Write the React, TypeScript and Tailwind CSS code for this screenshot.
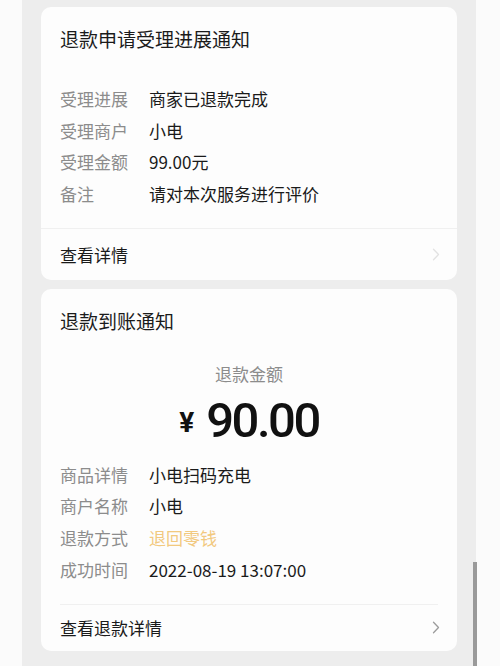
const font = "font-['PingFang_SC','Noto_Sans_CJK_SC',sans-serif]"

interface Row {
  label: string
  value: string
  accent?: boolean
}

const progressRows: Row[] = [
  { label: '受理进展', value: '商家已退款完成' },
  { label: '受理商户', value: '小电' },
  { label: '受理金额', value: '99.00元' },
  { label: '备注', value: '请对本次服务进行评价' },
]

const refundRows: Row[] = [
  { label: '商品详情', value: '小电扫码充电' },
  { label: '商户名称', value: '小电' },
  { label: '退款方式', value: '退回零钱', accent: true },
  { label: '成功时间', value: '2022-08-19 13:07:00' },
]

function Chevron({ color }: { color: string }) {
  return (
    <svg width="8" height="13" viewBox="0 0 8 13" fill="none" className={color}>
      <path d="M1.5 1.2 L6.5 6.5 L1.5 11.8" stroke="currentColor" strokeWidth="1.3" strokeLinecap="round" strokeLinejoin="round" />
    </svg>
  )
}

function InfoRows({ rows }: { rows: Row[] }) {
  return (
    <div className="flex flex-col">
      {rows.map((r) => (
        <div key={r.label} className="flex h-[31.7px] items-center text-[17px] leading-[31.7px]">
          <span className="w-[89px] shrink-0 text-[#8c8c8c]">{r.label}</span>
          <span className={r.accent ? 'text-[#f2c97f]' : 'text-[#1a1a1a]'}>{r.value}</span>
        </div>
      ))}
    </div>
  )
}

export default function App() {
  return (
    <div className={`relative h-[666px] w-[500px] overflow-hidden bg-[#fbfbfb] ${font}`}>
      <div className="ml-[22px] flex h-full w-[454px] flex-col gap-[9px] bg-[#ededed] px-[19px] pt-[7px]">
        {/* 受理进展 */}
        <div className="rounded-[10px] bg-[#fdfdfd]">
          <div className="px-[19px] pb-[18px] pt-[18px]">
            <div className="text-[19px] leading-[28px] text-[#1b1b1b]">退款申请受理进展通知</div>
            <div className="mt-[30px]">
              <InfoRows rows={progressRows} />
            </div>
          </div>
          <div className="h-px bg-[#f0f0f0]" />
          <div className="flex h-[51px] items-center justify-between pl-[19px] pr-[17px]">
            <span className="text-[17px] text-[#1a1a1a]">查看详情</span>
            <Chevron color="text-[#e2e2e2]" />
          </div>
        </div>

        {/* 退款到账 */}
        <div className="rounded-[10px] bg-[#fdfdfd]">
          <div className="px-[19px] pb-[18px] pt-[18px]">
            <div className="text-[19px] leading-[28px] text-[#1b1b1b]">退款到账通知</div>
            <div className="mt-[25px] text-center text-[17px] leading-[28px] text-[#8c8c8c]">退款金额</div>
            <div className="mt-[5px] flex h-[56px] items-center justify-center">
              <span className="mr-[12px] mt-[4px] font-['Roboto',sans-serif] text-[28px] font-bold text-[#111]">¥</span>
              <span className="font-['Roboto',sans-serif] text-[49px] font-medium leading-none tracking-[-2.5px] text-[#111]">
                90.00
              </span>
            </div>
            <div className="mt-[10px]">
              <InfoRows rows={refundRows} />
            </div>
          </div>
          <div className="mx-[19px] h-px bg-[#f0f0f0]" />
          <div className="flex h-[46px] items-center justify-between pl-[19px] pr-[17px]">
            <span className="text-[17px] text-[#1a1a1a]">查看退款详情</span>
            <Chevron color="text-[#9c9c9c]" />
          </div>
        </div>
      </div>

      {/* scrollbar */}
      <div className="absolute left-[473px] top-[562px] h-[104px] w-[4px] bg-[#9a9a9a]" />
    </div>
  )
}
